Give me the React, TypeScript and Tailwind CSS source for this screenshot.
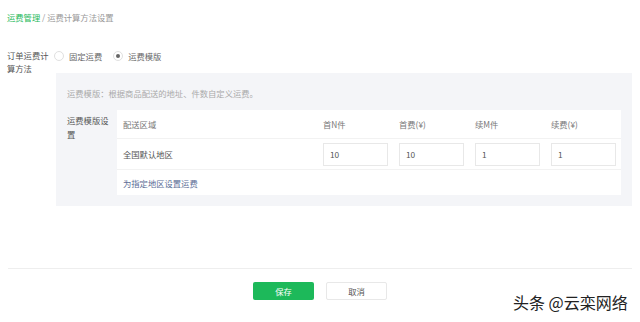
import React from 'react';

const cols = ['首N件', '首费(¥)', '续M件', '续费(¥)'];
const vals = ['10', '10', '1', '1'];

function Radio({ checked, label }: { checked?: boolean; label: string }) {
  return (
    <label className="flex items-center gap-[5px]">
      <span className="flex h-[10px] w-[10px] items-center justify-center rounded-full border border-[#e0e0e0] bg-white">
        {checked && <span className="h-[4px] w-[4px] rounded-full bg-[#666]" />}
      </span>
      <span>{label}</span>
    </label>
  );
}

export default function App() {
  return (
    <div
      className="relative h-[322px] w-[640px] overflow-hidden bg-white text-[8.3px] leading-[14px] text-[#555]"
      style={{ fontFamily: '"Noto Sans CJK SC", "Noto Sans", sans-serif' }}
    >
      {/* breadcrumb */}
      <div className="pl-[7px] pt-[10px]">
        <span className="text-[#1db95a]">运费管理</span>
        <span className="text-[#999]"> / 运费计算方法设置</span>
      </div>

      <div className="mt-[25px] flex pl-[7px] pr-[8px]">
        <div className="w-[47px] pr-[4px] leading-[13px] text-[#555]">订单运费计算方法</div>
        <div className="flex-1">
          <div className="flex h-[14px] items-center gap-[11px] text-[#666]">
            <Radio label="固定运费" />
            <Radio checked label="运费模版" />
          </div>

          <div className="mt-[10px] ml-[2px] bg-[#f4f5f8] px-[11px] pb-[11px] pt-[13px]">
            <div className="mb-[10px] text-[#aaa]">运费模版：根据商品配送的地址、件数自定义运费。</div>
            <div className="flex">
              <div className="w-[50px] pr-[7px] pt-[3px] leading-[14px] text-[#555]">运费模版设置</div>
              <div className="flex-1 bg-white">
                <div className="grid h-[29px] grid-cols-[1fr_76px_76px_76px_76px] items-center border-b border-[#f2f2f2] text-[#777]">
                  <div className="pl-[6px]">配送区域</div>
                  {cols.map((c) => (
                    <div key={c} className="pl-[6px]">
                      {c}
                    </div>
                  ))}
                </div>
                <div className="grid h-[31px] grid-cols-[1fr_76px_76px_76px_76px] items-center border-b border-[#f2f2f2]">
                  <div className="pl-[6px] text-[#555]">全国默认地区</div>
                  {vals.map((v, i) => (
                    <div key={i} className="pl-[6px]">
                      <input
                        readOnly
                        value={v}
                        className="h-[23px] w-[65px] border border-[#e8e8e8] bg-white px-[6px] text-[8.3px] text-[#555] outline-none"
                      />
                    </div>
                  ))}
                </div>
                <div className="flex h-[25px] items-center pl-[6px] text-[#5a6d96]">为指定地区设置运费</div>
              </div>
            </div>
          </div>
        </div>
      </div>

      <div className="mx-[8px] mt-[62px] border-t border-[#eeeeee]" />

      <div className="mt-[13px] flex justify-center gap-[12px]">
        <button className="h-[18px] w-[61px] rounded-[2px] bg-[#1db95a] text-[8.3px] text-white">保存</button>
        <button className="h-[18px] w-[61px] rounded-[2px] border border-[#e8e8e8] bg-white text-[8.3px] text-[#555]">
          取消
        </button>
      </div>

      <div className="absolute left-[513px] top-[292px] text-[16px] leading-[20px] text-[#222] [text-shadow:0_0_2px_#fff,0_0_3px_#fff]">
        头条 @云栾网络
      </div>
    </div>
  );
}
